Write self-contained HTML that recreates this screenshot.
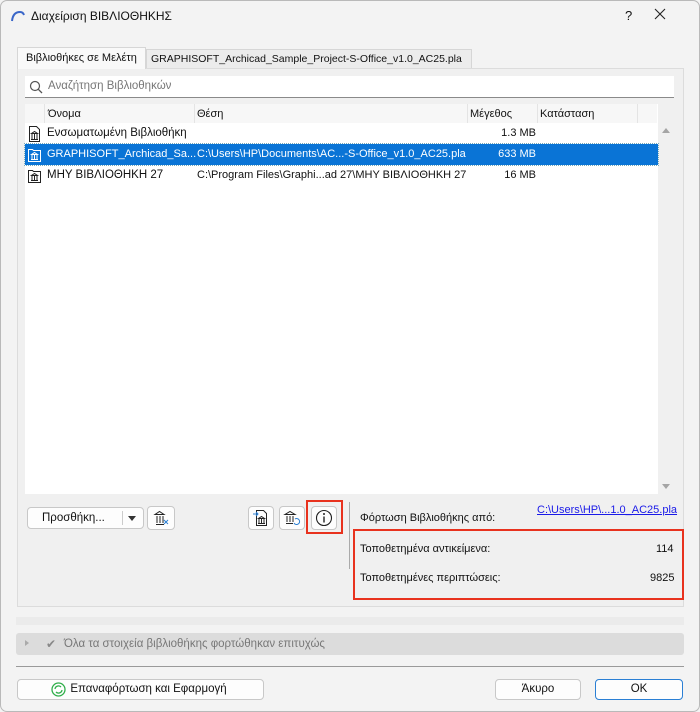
<!DOCTYPE html>
<html><head><meta charset="utf-8"><style>
*{box-sizing:border-box;margin:0;padding:0}
body{width:700px;height:712px;background:#f3f3f3;font-family:"Liberation Sans","DejaVu Sans",sans-serif;font-size:11px;color:#111;position:relative;overflow:hidden}
.a{position:absolute;white-space:nowrap}
.btn{position:absolute;background:#fdfdfd;border:1px solid #c8c8c8;border-radius:4px;text-align:center;font-size:11.5px;white-space:nowrap}
.row{position:absolute;left:25px;width:633px;height:21px;line-height:21px;font-size:11px}
.red{position:absolute;border:2px solid #e8321e}
.sz{position:absolute;right:122px}
</style></head><body>
<div class="a" style="left:0;top:0;width:700px;height:712px;border:1px solid #b9b9b9;border-radius:7px"></div>
<svg class="a" style="left:10px;top:9px" width="16" height="14"><path d="M2 12 Q3 3 10 3 Q13 3 14 6" fill="none" stroke="#3a66c8" stroke-width="2"/></svg>
<div class="a" style="left:31px;top:9px;font-size:12px">Διαχείριση ΒΙΒΛΙΟΘΗΚΗΣ</div>
<div class="a" style="left:625px;top:8px;font-size:13px">?</div>
<svg class="a" style="left:654px;top:8px" width="12" height="12"><path d="M1 1L11 11M11 1L1 11" stroke="#222" stroke-width="1.1"/></svg>
<!-- tabs -->
<div class="a" style="left:17px;top:47px;width:129px;height:22px;background:#f9f9f9;border:1px solid #d6d6d6;border-bottom:none;line-height:20px;padding-left:8px;font-size:11px;z-index:2">Βιβλιοθήκες σε Μελέτη</div>
<div class="a" style="left:146px;top:49px;width:326px;height:20px;background:#ececec;border:1px solid #d6d6d6;border-bottom:none;line-height:18px;padding-left:4px;font-size:10.5px">GRAPHISOFT_Archicad_Sample_Project-S-Office_v1.0_AC25.pla</div>
<div class="a" style="left:17px;top:68px;width:667px;height:539px;background:#f0f0f0;border:1px solid #dcdcdc"></div>
<!-- search -->
<div class="a" style="left:25px;top:76px;width:649px;height:22px;background:#fff;border-bottom:1px solid #8a8a8a"></div>
<svg class="a" style="left:29px;top:80px" width="14" height="14"><circle cx="6" cy="6" r="4.5" fill="none" stroke="#555" stroke-width="1.2"/><path d="M9.3 9.3L13 13" stroke="#555" stroke-width="1.3"/></svg>
<div class="a" style="left:48px;top:80px;color:#777;font-size:11.5px">Αναζήτηση Βιβλιοθηκών</div>
<!-- list -->
<div class="a" style="left:25px;top:104px;width:633px;height:390px;background:#fff"></div>
<div class="a" style="left:25px;top:104px;width:632px;height:19px;background:#f7f7f7"></div>
<div class="a" style="left:44px;top:104px;width:1px;height:19px;background:#e4e4e4"></div>
<div class="a" style="left:194px;top:104px;width:1px;height:19px;background:#e4e4e4"></div>
<div class="a" style="left:467px;top:104px;width:1px;height:19px;background:#e4e4e4"></div>
<div class="a" style="left:537px;top:104px;width:1px;height:19px;background:#e4e4e4"></div>
<div class="a" style="left:637px;top:104px;width:1px;height:19px;background:#e4e4e4"></div>
<div class="a" style="left:48px;top:108px">Όνομα</div>
<div class="a" style="left:197px;top:108px">Θέση</div>
<div class="a" style="left:470px;top:108px">Μέγεθος</div>
<div class="a" style="left:540px;top:108px">Κατάσταση</div>
<div class="a" style="left:658px;top:123px;width:16px;height:371px;background:#f0f0f0"></div>
<div class="a" style="left:662px;top:128px;width:0;height:0;border:4px solid transparent;border-bottom:5px solid #a5a5a5;border-top:none"></div>
<div class="a" style="left:662px;top:484px;width:0;height:0;border:4px solid transparent;border-top:5px solid #a5a5a5;border-bottom:none"></div>
<div class="row" style="top:123px"><span class="a" style="left:22px;font-size:11.5px">Ενσωματωμένη Βιβλιοθήκη</span><span class="sz">1.3 MB</span></div>
<div class="row" style="top:144px;background:#0a74d6;color:#fff;outline:1px dotted #7ab;"><span class="a" style="left:22px;font-size:11px">GRAPHISOFT_Archicad_Sa...</span><span class="a" style="left:172px">C:\Users\HP\Documents\AC...-S-Office_v1.0_AC25.pla</span><span class="sz">633 MB</span></div>
<div class="row" style="top:165px"><span class="a" style="left:22px;font-size:11.5px">ΜΗΥ ΒΙΒΛΙΟΘΗΚΗ 27</span><span class="a" style="left:172px">C:\Program Files\Graphi...ad 27\ΜΗΥ ΒΙΒΛΙΟΘΗΚΗ 27</span><span class="sz">16 MB</span></div>
<svg class="a" style="left:27px;top:125px" width="16" height="60"><g fill="none" stroke="#222" stroke-width="1"><path d="M2.5 1.5h7l3 3v12h-10z"/><path d="M4 14.5h7M4.5 8.5h6l-3-2z M5 9v5M7.5 9v5M10 9v5"/><g transform="translate(0,21)" stroke="#fff"><path d="M1.5 3.5h4l1 1h7v11h-12z"/><path d="M4 13.5h7M4.5 8.5h6l-3-2z M5 9v4M7.5 9v4M10 9v4"/></g><g transform="translate(0,42)"><path d="M1.5 3.5h4l1 1h7v11h-12z"/><path d="M4 13.5h7M4.5 8.5h6l-3-2z M5 9v4M7.5 9v4M10 9v4"/></g></g></svg>
<!-- buttons -->
<div class="btn" style="left:27px;top:507px;width:117px;height:22px;line-height:20px;text-align:left;padding-left:14px">Προσθήκη...</div>
<div class="a" style="left:122px;top:511px;width:1px;height:14px;background:#ccc"></div>
<div class="a" style="left:128px;top:516px;border:4px solid transparent;border-top:5px solid #333;border-bottom:none"></div>
<div class="btn" style="left:147px;top:506px;width:28px;height:24px"></div>
<svg class="a" style="left:152px;top:509px" width="18" height="18"><g fill="none" stroke="#222"><path d="M3 5.5h9l-4.5-3zM4 15.5h8M5 7v7M8 7v7M11 7v7"/><path d="M12 11l4 4M16 11l-4 4" stroke="#2a7fd4"/></g></svg>
<div class="btn" style="left:248px;top:506px;width:26px;height:24px"></div>
<svg class="a" style="left:252px;top:509px" width="18" height="18"><g fill="none" stroke="#222"><path d="M4.5 1.5h7l3 3v12h-10z"/><path d="M6 14.5h7M6.5 9.5h6l-3-2zM7 10v4M9.5 10v4M12 10v4"/><path d="M1 5h5M4 3l2 2-2 2" stroke="#2a7fd4"/></g></svg>
<div class="btn" style="left:279px;top:506px;width:26px;height:24px"></div>
<svg class="a" style="left:283px;top:509px" width="18" height="18"><g fill="none" stroke="#222"><path d="M2 5.5h10l-5-3zM3 14.5h7M4 7v6M7 7v6M10 7v6"/><path d="M12 10a3 3 0 1 1 -1 4" stroke="#2a7fd4"/></g></svg>
<div class="btn" style="left:311px;top:506px;width:26px;height:24px"></div>
<svg class="a" style="left:315px;top:509px" width="18" height="18"><circle cx="9" cy="9" r="7.5" fill="none" stroke="#222" stroke-width="1.1"/><path d="M9 7.5v6" stroke="#222" stroke-width="1.4"/><circle cx="9" cy="5" r="1" fill="#222"/></svg>
<div class="red" style="left:306px;top:500px;width:37px;height:34px"></div>
<div class="a" style="left:349px;top:502px;width:1px;height:67px;background:#aaa"></div>
<div class="a" style="left:360px;top:512px">Φόρτωση Βιβλιοθήκης από:</div>
<div class="a" style="left:537px;top:504px;color:#1a1ae8;text-decoration:underline">C:\Users\HP\...1.0_AC25.pla</div>
<div class="red" style="left:353px;top:529px;width:331px;height:71px"></div>
<div class="a" style="left:360px;top:543px">Τοποθετημένα αντικείμενα:</div>
<div class="a" style="left:656px;top:543px">114</div>
<div class="a" style="left:360px;top:572px">Τοποθετημένες περιπτώσεις:</div>
<div class="a" style="left:650px;top:572px">9825</div>
<!-- status -->
<div class="a" style="left:16px;top:617px;width:668px;height:8px;background:#ebebeb"></div>
<div class="a" style="left:16px;top:633px;width:668px;height:22px;background:#dcdcdc;border-radius:3px"></div>
<div class="a" style="left:25px;top:640px;border:3px solid transparent;border-left:4px solid #aaa;border-right:none"></div>
<div class="a" style="left:46px;top:637px;color:#888;font-size:12px">✔</div>
<div class="a" style="left:64px;top:638px;color:#777;font-size:11.5px">Όλα τα στοιχεία βιβλιοθήκης φορτώθηκαν επιτυχώς</div>
<div class="a" style="left:16px;top:666px;width:668px;height:1px;background:#9a9a9a"></div>
<div class="btn" style="left:17px;top:679px;width:247px;height:21px;line-height:19px;padding-left:16px">Επαναφόρτωση και Εφαρμογή</div>
<svg class="a" style="left:51px;top:682px" width="15" height="15"><circle cx="7.5" cy="7.5" r="6.5" fill="#fff" stroke="#2fae4a" stroke-width="1.3"/><path d="M4 7a3.5 3.5 0 0 1 6-2M11 8a3.5 3.5 0 0 1 -6 2" fill="none" stroke="#2fae4a" stroke-width="1.3"/></svg>
<div class="btn" style="left:495px;top:679px;width:86px;height:21px;line-height:19px">Άκυρο</div>
<div class="btn" style="left:595px;top:679px;width:88px;height:21px;line-height:19px;border-color:#2a7fd4">OK</div>
</body></html>
